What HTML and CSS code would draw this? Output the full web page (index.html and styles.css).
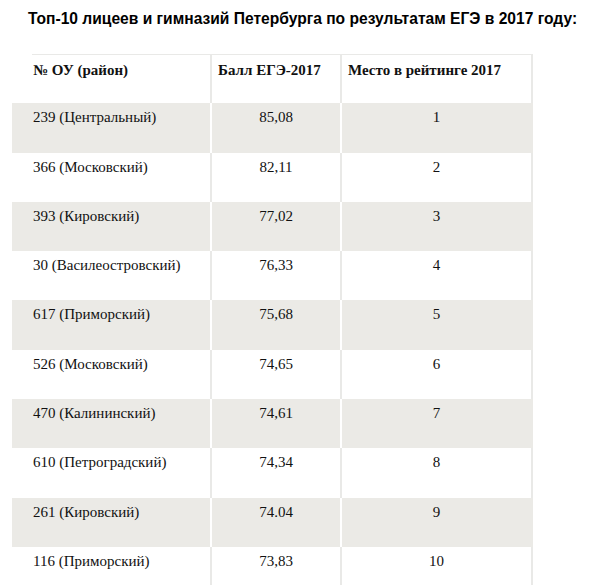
FILE: index.html
```html
<!DOCTYPE html>
<html lang="ru">
<head>
<meta charset="utf-8">
<title>Топ-10 лицеев и гимназий</title>
<link rel="stylesheet" href="styles.css">
</head>
<body>
<h2 class="title">Топ-10 лицеев и гимназий Петербурга по результатам ЕГЭ в 2017 году:</h2>
<table class="rating">
  <colgroup>
    <col class="c1"><col class="c2"><col class="c3">
  </colgroup>
  <thead>
    <tr><th class="first">№ ОУ (район)</th><th>Балл ЕГЭ-2017</th><th>Место в рейтинге 2017</th></tr>
  </thead>
  <tbody>
    <tr class="odd"><td>239 (Центральный)</td><td class="num">85,08</td><td class="num">1</td></tr>
    <tr><td>366 (Московский)</td><td class="num">82,11</td><td class="num">2</td></tr>
    <tr class="odd"><td>393 (Кировский)</td><td class="num">77,02</td><td class="num">3</td></tr>
    <tr><td>30 (Василеостровский)</td><td class="num">76,33</td><td class="num">4</td></tr>
    <tr class="odd"><td>617 (Приморский)</td><td class="num">75,68</td><td class="num">5</td></tr>
    <tr><td>526 (Московский)</td><td class="num">74,65</td><td class="num">6</td></tr>
    <tr class="odd"><td>470 (Калининский)</td><td class="num">74,61</td><td class="num">7</td></tr>
    <tr><td>610 (Петроградский)</td><td class="num">74,34</td><td class="num">8</td></tr>
    <tr class="odd"><td>261 (Кировский)</td><td class="num">74.04</td><td class="num">9</td></tr>
    <tr><td>116 (Приморский)</td><td class="num">73,83</td><td class="num">10</td></tr>
  </tbody>
</table>
</body>
</html>
```
FILE: styles.css
```css
html, body {
  margin: 0;
  padding: 0;
  background: #fff;
  color: #111;
}

.title {
  margin: 10px 0 0 28px;
  font-family: "Liberation Sans", Arial, sans-serif;
  font-weight: bold;
  font-size: 15.6px;
  line-height: 17px;
  color: #000;
}

.rating {
  margin: 27px 0 0 12px;
  border-collapse: separate;
  border-spacing: 0;
  table-layout: fixed;
  width: 521px;
  font-family: "Liberation Serif", "Times New Roman", serif;
  font-size: 15px;
  color: #111;
}

.c1 { width: 200px; }
.c2 { width: 130px; }
.c3 { width: 191px; }

.rating th,
.rating td {
  box-sizing: border-box;
  height: 49.3px;
  padding: 6px 6px 0 6px;
  vertical-align: top;
  text-align: left;
  line-height: 17px;
  border-right: 2px solid #e9e9e7;
}

.rating th {
  font-weight: bold;
  border-top: 1px solid #e9e9e7;
  padding-top: 7px;
}

.rating th.first {
  border-top: 0;
  padding-top: 8px;
  background: linear-gradient(#e9e9e7, #e9e9e7) no-repeat 20px 0 / calc(100% - 20px) 1px;
}

.rating th:first-child,
.rating td:first-child {
  padding-left: 21px;
}

.rating td.num {
  text-align: center;
}

.rating tr.odd td {
  background: #ebeae6;
  border-right-color: #fff;
}

.rating tr.odd td:last-child {
  border-right-color: #ebeae6;
}
```
